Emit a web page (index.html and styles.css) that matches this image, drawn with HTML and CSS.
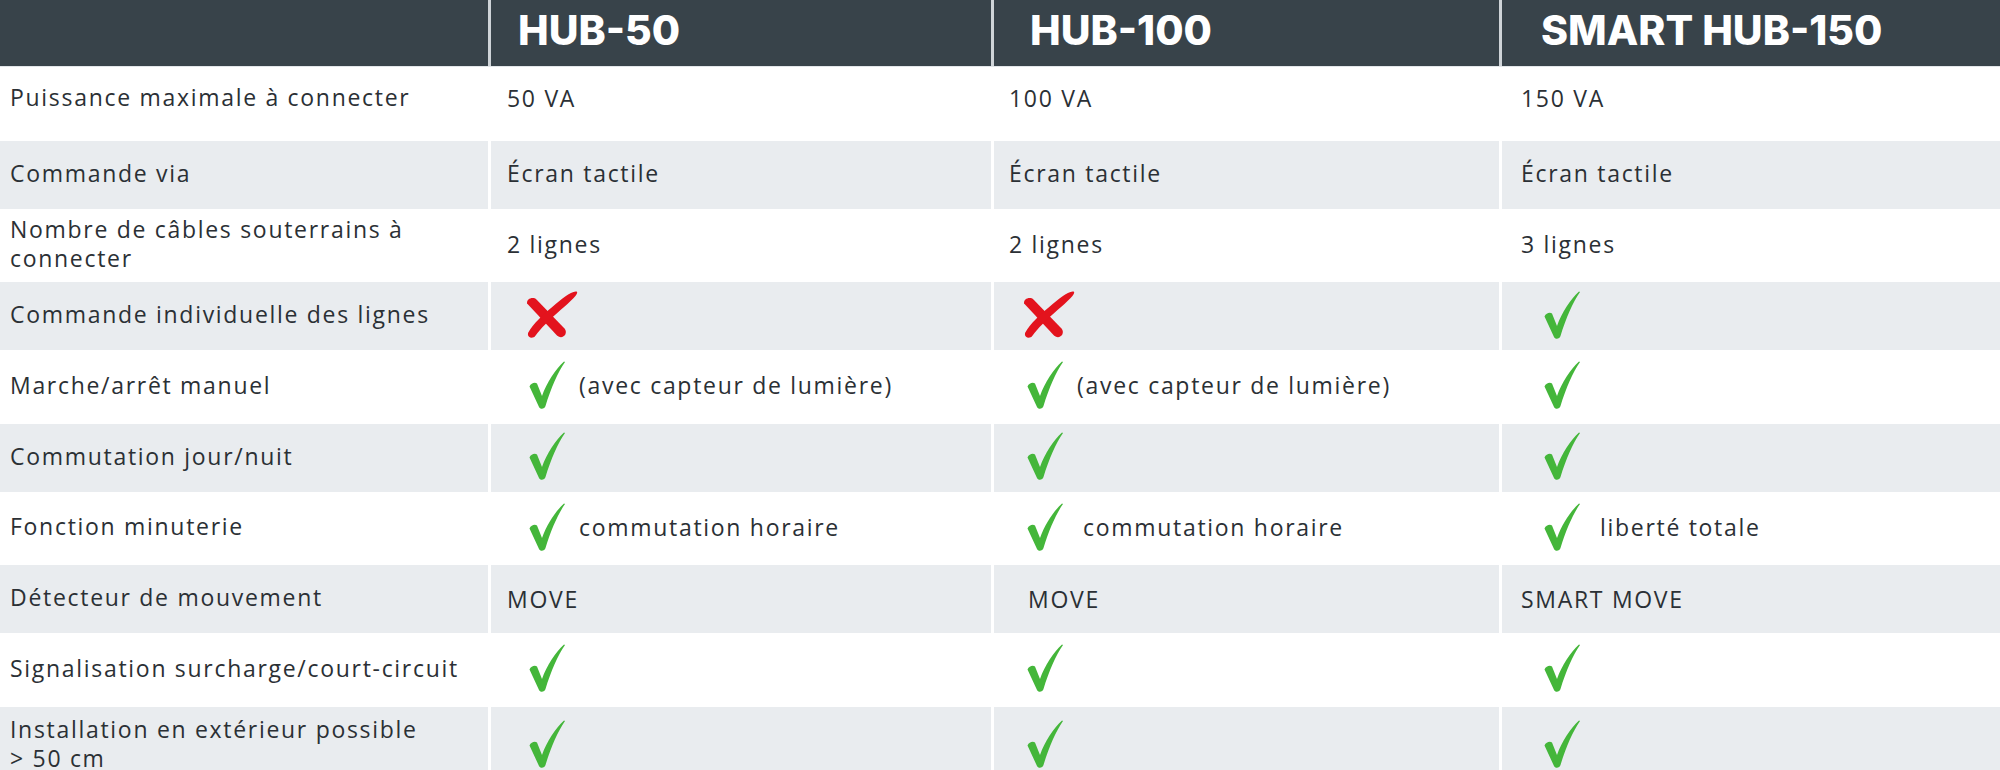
FILE: index.html
```html
<!DOCTYPE html>
<html lang="fr">
<head>
<meta charset="utf-8">
<title>Comparatif HUB</title>
<link rel="stylesheet" href="styles.css">
</head>
<body>
<svg width="0" height="0" class="defs" aria-hidden="true">
  <defs>
    <symbol id="ok" viewBox="0 0 36 48">
      <path d="M0.5 25.5 C2 22 6 21 8 22.5 L13 35 C18 21 26 9 35 0.5 L36 1 C29 11 22 27 16.5 45 C15.5 48.5 11 48.5 10 46 Z" fill="#44b63a"/>
    </symbol>
    <symbol id="ko" viewBox="0 0 52 48">
      <path d="M3 13 C2 8 9 6 12 9 L39 37 C43 42 37 48 32 44 Z" fill="#e3131d"/>
      <path d="M51 1.5 C53 4.5 42 13 32 22 C24 29 16 37 11 44 C8.5 47.5 2.5 46 4 41 C9 32 19 23 28 15.5 C36 9 46 0 51 1.5 Z" fill="#e3131d"/>
    </symbol>
  </defs>
</svg>
<div class="table">
  <div class="row head">
    <div class="cell label"></div>
    <div class="cell h2">HUB-50</div>
    <div class="cell h3">HUB-100</div>
    <div class="cell h4">SMART HUB-150</div>
  </div>

  <div class="row white first">
    <div class="cell label">Puissance maximale à connecter</div>
    <div class="cell t2">50 VA</div>
    <div class="cell t3">100 VA</div>
    <div class="cell t4">150 VA</div>
  </div>

  <div class="row gray">
    <div class="cell label">Commande via</div>
    <div class="cell t2">Écran tactile</div>
    <div class="cell t3">Écran tactile</div>
    <div class="cell t4">Écran tactile</div>
  </div>

  <div class="row white">
    <div class="cell label">Nombre de câbles souterrains à connecter</div>
    <div class="cell t2">2 lignes</div>
    <div class="cell t3">2 lignes</div>
    <div class="cell t4">3 lignes</div>
  </div>

  <div class="row gray">
    <div class="cell label">Commande individuelle des lignes</div>
    <div class="cell x2"><svg class="ko"><use href="#ko"/></svg></div>
    <div class="cell x3"><svg class="ko"><use href="#ko"/></svg></div>
    <div class="cell c4"><svg class="ok"><use href="#ok"/></svg></div>
  </div>

  <div class="row white">
    <div class="cell label">Marche/arrêt manuel</div>
    <div class="cell c2"><svg class="ok"><use href="#ok"/></svg><span class="note">(avec capteur de lumière)</span></div>
    <div class="cell c3"><svg class="ok"><use href="#ok"/></svg><span class="note">(avec capteur de lumière)</span></div>
    <div class="cell c4"><svg class="ok"><use href="#ok"/></svg></div>
  </div>

  <div class="row gray">
    <div class="cell label">Commutation jour/nuit</div>
    <div class="cell c2"><svg class="ok"><use href="#ok"/></svg></div>
    <div class="cell c3"><svg class="ok"><use href="#ok"/></svg></div>
    <div class="cell c4"><svg class="ok"><use href="#ok"/></svg></div>
  </div>

  <div class="row white">
    <div class="cell label">Fonction minuterie</div>
    <div class="cell c2"><svg class="ok"><use href="#ok"/></svg><span class="note">commutation horaire</span></div>
    <div class="cell c3"><svg class="ok"><use href="#ok"/></svg><span class="note wide">commutation horaire</span></div>
    <div class="cell c4"><svg class="ok"><use href="#ok"/></svg><span class="note wide">liberté totale</span></div>
  </div>

  <div class="row gray">
    <div class="cell label">Détecteur de mouvement</div>
    <div class="cell t2 low">MOVE</div>
    <div class="cell t3 move low">MOVE</div>
    <div class="cell t4 low">SMART MOVE</div>
  </div>

  <div class="row white">
    <div class="cell label">Signalisation surcharge/court-circuit</div>
    <div class="cell c2"><svg class="ok"><use href="#ok"/></svg></div>
    <div class="cell c3"><svg class="ok"><use href="#ok"/></svg></div>
    <div class="cell c4"><svg class="ok"><use href="#ok"/></svg></div>
  </div>

  <div class="row gray last">
    <div class="cell label">Installation en extérieur possible<br>&gt; 50 cm</div>
    <div class="cell c2"><svg class="ok"><use href="#ok"/></svg></div>
    <div class="cell c3"><svg class="ok"><use href="#ok"/></svg></div>
    <div class="cell c4"><svg class="ok"><use href="#ok"/></svg></div>
  </div>
</div>
</body>
</html>
```

FILE: styles.css
```css
html, body {
  margin: 0;
  padding: 0;
  overflow: hidden;
  background: #ffffff;
}

body {
  width: 2000px;
  font-family: "Open Sans", "Liberation Sans", sans-serif;
  font-size: 23px;
  letter-spacing: 1.7px;
  color: #2b3035;
}

.defs {
  position: absolute;
  width: 0;
  height: 0;
}

.table {
  display: flex;
  flex-direction: column;
}

.row {
  display: grid;
  grid-template-columns: 488px 500px 505px 1fr;
  column-gap: 3px;
  background: #ffffff;
}

.cell {
  display: flex;
  align-items: center;
  padding-bottom: 3px;
  box-sizing: border-box;
}

.head {
  height: 66px;
  background: #cfd4d8;
  border-bottom: 1px solid #e2e6e9;
}

.head .cell {
  background: #38434a;
  color: #ffffff;
  font-family: "Inter", "Liberation Sans", sans-serif;
  font-weight: 800;
  font-size: 41px;
  letter-spacing: 0;
  padding-bottom: 6px;
}

.white {
  height: 73.5px;
}

.white .cell {
  background: #ffffff;
}

.first .cell {
  padding-bottom: 12px;
}

.gray {
  height: 68px;
}

.gray .cell {
  background: #e9ecef;
}

.last .cell {
  padding-bottom: 0;
  padding-top: 6px;
}

.label {
  padding-left: 10px;
  padding-right: 20px;
  line-height: 29px;
}

.h2 { padding-left: 27px; }
.h3 { padding-left: 36px; }
.h4 { padding-left: 39px; }

.t2 { padding-left: 16px; }
.t3 { padding-left: 15px; }
.t4 { padding-left: 19px; }
.move { padding-left: 34px; }
.low { padding-top: 3px; }

.c2 { padding-left: 38px; }
.c3 { padding-left: 33px; }
.c4 { padding-left: 42px; }

.x2 { padding-left: 33px; }
.x3 { padding-left: 27px; }

.ok {
  width: 36px;
  height: 48px;
  flex: none;
}

.ko {
  width: 54px;
  height: 50px;
  flex: none;
}

.note {
  margin-left: 14px;
}

.note.wide {
  margin-left: 20px;
}
```
